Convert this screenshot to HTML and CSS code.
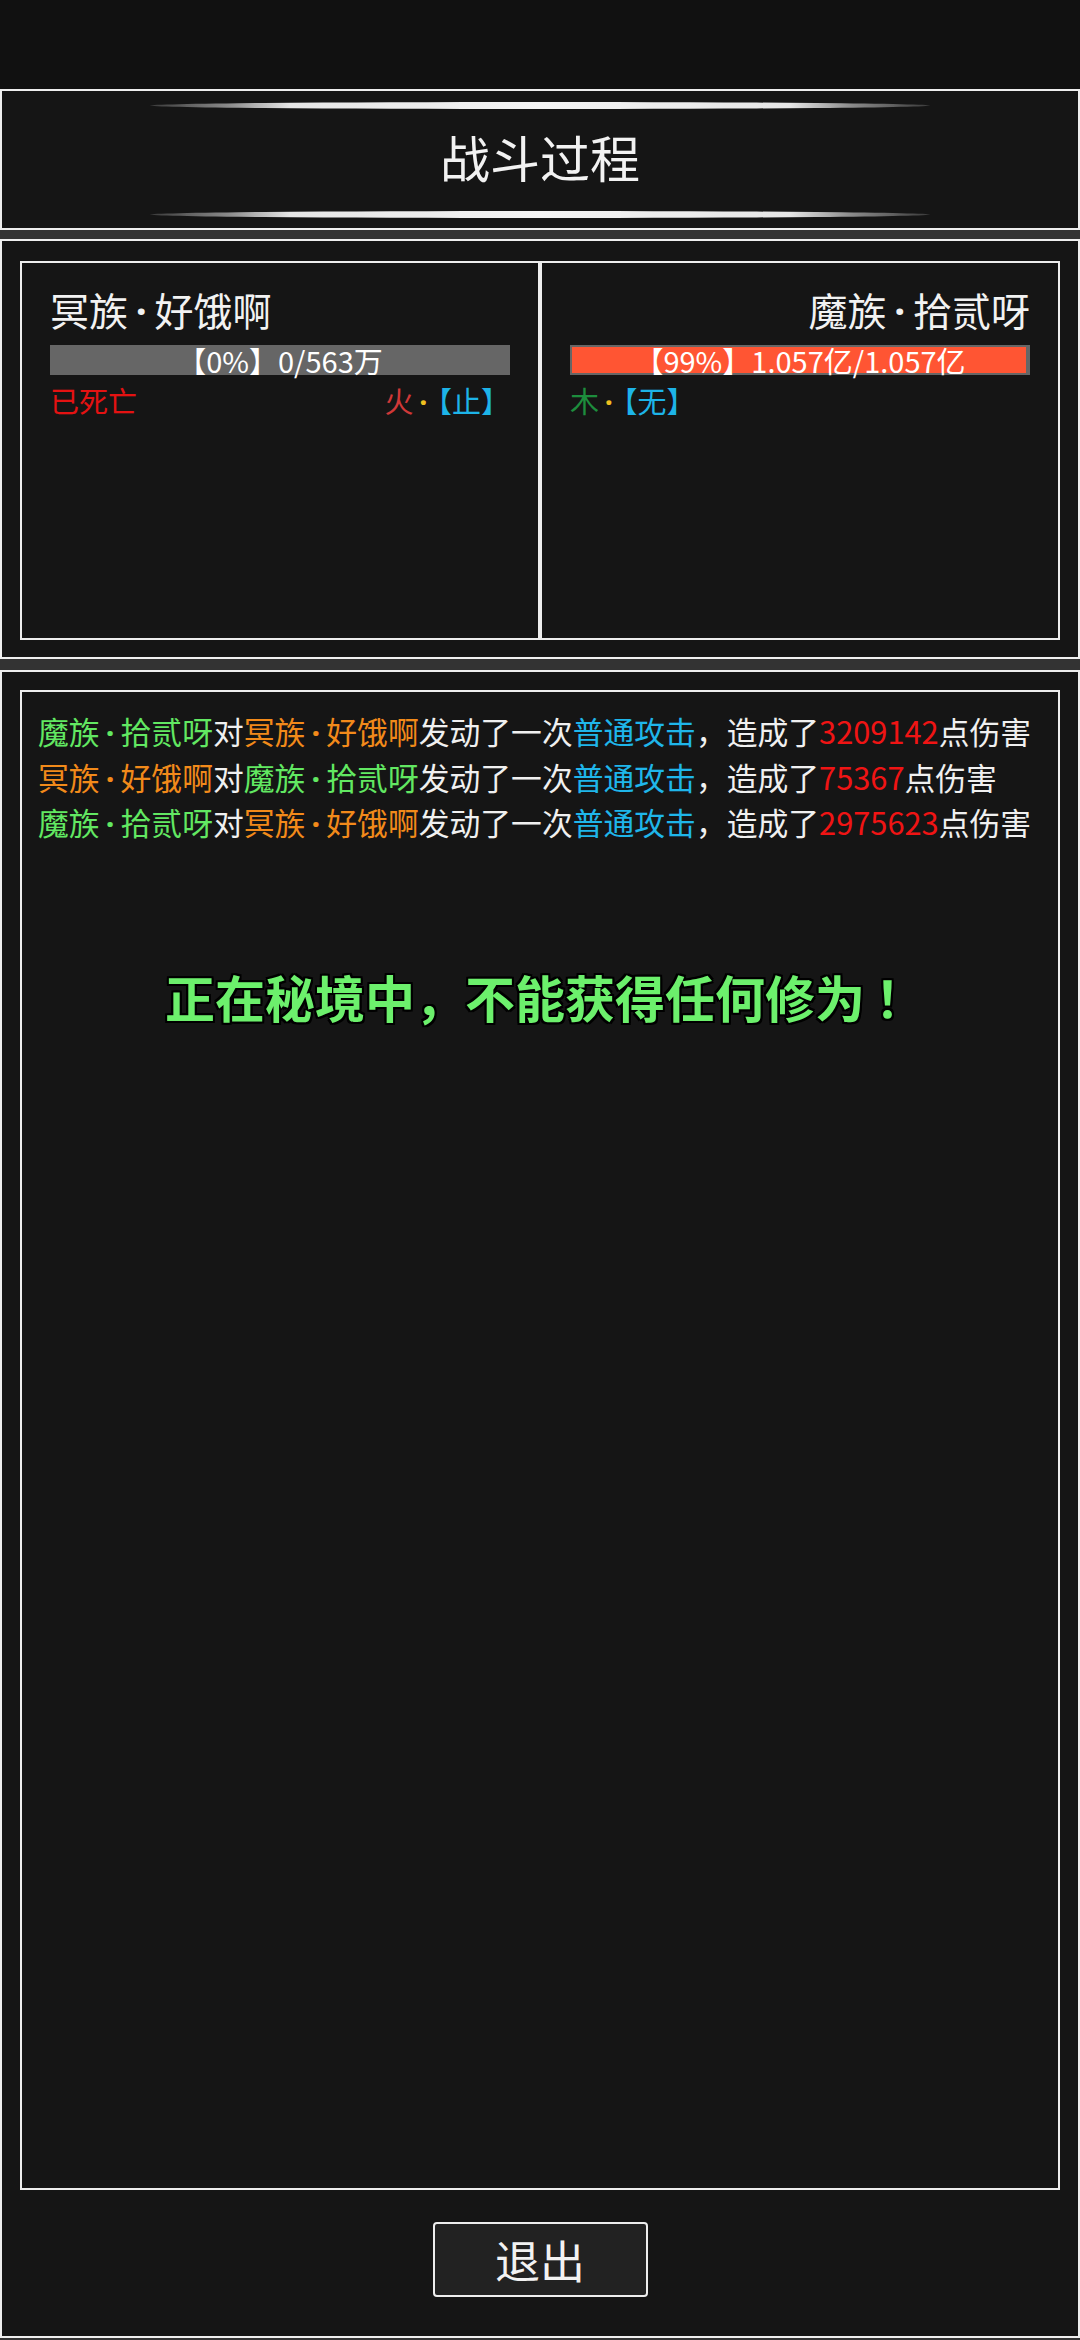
FILE: index.html
```html
<!DOCTYPE html>
<html lang="zh-CN">
<head>
<meta charset="utf-8">
<title>战斗过程</title>
<link rel="stylesheet" href="styles.css">
</head>
<body>
<div class="screen">
  <div class="topbar"></div>

  <section class="panel header">
    <div class="glow"></div>
    <h1 class="title">战斗过程</h1>
    <div class="glow"></div>
  </section>

  <section class="panel fighters">
    <div class="fighter">
      <div class="name">冥族<span class="dot">·</span>好饿啊</div>
      <div class="hp"><div class="fill" style="width:0%"></div><span class="hp-text">【0%】0/563万</span></div>
      <div class="status">
        <span class="dead">已死亡</span>
        <span class="elem"><span class="fire">火</span><span class="sep">·</span><span class="tag">【止】</span></span>
      </div>
    </div>
    <div class="fighter right">
      <div class="name">魔族<span class="dot">·</span>拾贰呀</div>
      <div class="hp"><div class="fill" style="width:99.6%"></div><span class="hp-text">【99%】1.057亿/1.057亿</span></div>
      <div class="status">
        <span class="elem"><span class="wood">木</span><span class="sep">·</span><span class="tag">【无】</span></span>
      </div>
    </div>
  </section>

  <section class="panel log">
    <div class="logbox">
      <p class="line"><span class="g">魔族<span class="dot">·</span>拾贰呀</span>对<span class="o">冥族<span class="dot">·</span>好饿啊</span>发动了一次<span class="c">普通攻击</span>，造成了<span class="r">3209142</span>点伤害</p>
      <p class="line"><span class="o">冥族<span class="dot">·</span>好饿啊</span>对<span class="g">魔族<span class="dot">·</span>拾贰呀</span>发动了一次<span class="c">普通攻击</span>，造成了<span class="r">75367</span>点伤害</p>
      <p class="line"><span class="g">魔族<span class="dot">·</span>拾贰呀</span>对<span class="o">冥族<span class="dot">·</span>好饿啊</span>发动了一次<span class="c">普通攻击</span>，造成了<span class="r">2975623</span>点伤害</p>
      <p class="notice">正在秘境中，不能获得任何修为<span class="bang">！</span></p>
    </div>
    <div class="actions">
      <button class="exit" type="button">退出</button>
    </div>
  </section>
</div>
</body>
</html>
```

FILE: styles.css
```css
* { box-sizing: border-box; }

html, body {
  margin: 0;
  padding: 0;
  background: #333333;
}

body {
  font-family: "Noto Sans CJK SC", "Noto Sans", sans-serif;
  color: #eeeeee;
}

.screen {
  width: 1080px;
  height: 2340px;
  display: flex;
  flex-direction: column;
}

.topbar {
  height: 89px;
  flex: none;
  background: #111111;
}

.panel {
  flex: none;
  border: 2px solid #eeeeee;
  background: #151515;
}

.dot,
.sep {
  font-family: "Noto Sans", "DejaVu Sans", sans-serif;
  font-weight: bold;
  line-height: 0;
}

.dot {
  padding: 0 0.2em;
}

.header {
  height: 141px;
  display: flex;
  flex-direction: column;
  justify-content: space-between;
  align-items: center;
  padding: 11px 0 10px;
}

.glow {
  width: 780px;
  height: 7px;
  border-radius: 50%;
  background: linear-gradient(90deg, #3a3a3a 0%, #8a8a8a 10%, #e6e6e6 18%, #f4f4f4 50%, #e6e6e6 82%, #8a8a8a 90%, #3a3a3a 100%);
}

.title {
  margin: 0 0 9px;
  font-size: 50px;
  font-weight: normal;
  line-height: 60px;
  color: #f2f2f2;
}

.fighters {
  margin-top: 9px;
  height: 420px;
  padding: 20px 18px 17px;
  display: grid;
  grid-template-columns: 1fr 1fr;
}

.fighter {
  border: 2px solid #eeeeee;
  padding: 22px 28px 0;
}

.name {
  font-size: 39px;
  line-height: 48px;
  height: 48px;
  color: #f2f2f2;
}

.right .name { text-align: right; }

.hp {
  position: relative;
  margin-top: 12px;
  height: 30px;
  border: 2px solid #666666;
  background: #666666;
}

.fill {
  height: 100%;
  background: #ff5533;
}

.hp-text {
  position: absolute;
  left: 0;
  right: 0;
  top: 0;
  text-align: center;
  font-size: 29px;
  line-height: 26px;
  color: #ffffff;
  white-space: nowrap;
}

.status {
  margin-top: 8px;
  display: flex;
  justify-content: space-between;
  font-size: 29px;
  line-height: 34px;
  height: 34px;
}

.dead { color: #e41212; }
.fire { color: #d03838; }
.wood { color: #1d8d3d; }
.sep {
  color: #efc020;
  padding: 0 0.35em 0 0.2em;
}
.tag { color: #1db4e8; }

.log {
  margin-top: 11px;
  height: 1668px;
  padding: 18px 18px 0;
  display: flex;
  flex-direction: column;
}

.logbox {
  height: 1500px;
  flex: none;
  border: 2px solid #eeeeee;
  padding: 16px 16px;
}

.line {
  margin: 0;
  font-size: 30.8px;
  line-height: 45.5px;
  height: 45.5px;
  color: #f0f0f0;
  white-space: nowrap;
}

.g { color: #62e862; }
.o { color: #f28a1a; }
.c { color: #1fb6ea; }
.r { color: #f01414; }

.notice {
  margin: 121px 0 0;
  text-align: center;
  font-size: 50px;
  line-height: 60px;
  font-weight: bold;
  color: #6cf06c;
  text-shadow: 2px 0 0 #000, -2px 0 0 #000, 0 2px 0 #000, 0 -2px 0 #000, 2px 2px 0 #000, -2px -2px 0 #000, 2px -2px 0 #000, -2px 2px 0 #000;
}

.bang {
  margin-left: 0.2em;
  margin-right: -0.2em;
}

.actions {
  display: flex;
  justify-content: center;
  padding-top: 32px;
}

.exit {
  width: 215px;
  height: 75px;
  background: #222222;
  border: 2px solid #eeeeee;
  border-radius: 4px;
  color: #f2f2f2;
  font-family: "Noto Sans CJK SC", "Noto Sans", sans-serif;
  font-size: 45px;
  line-height: 1;
  padding: 0;
}
```
